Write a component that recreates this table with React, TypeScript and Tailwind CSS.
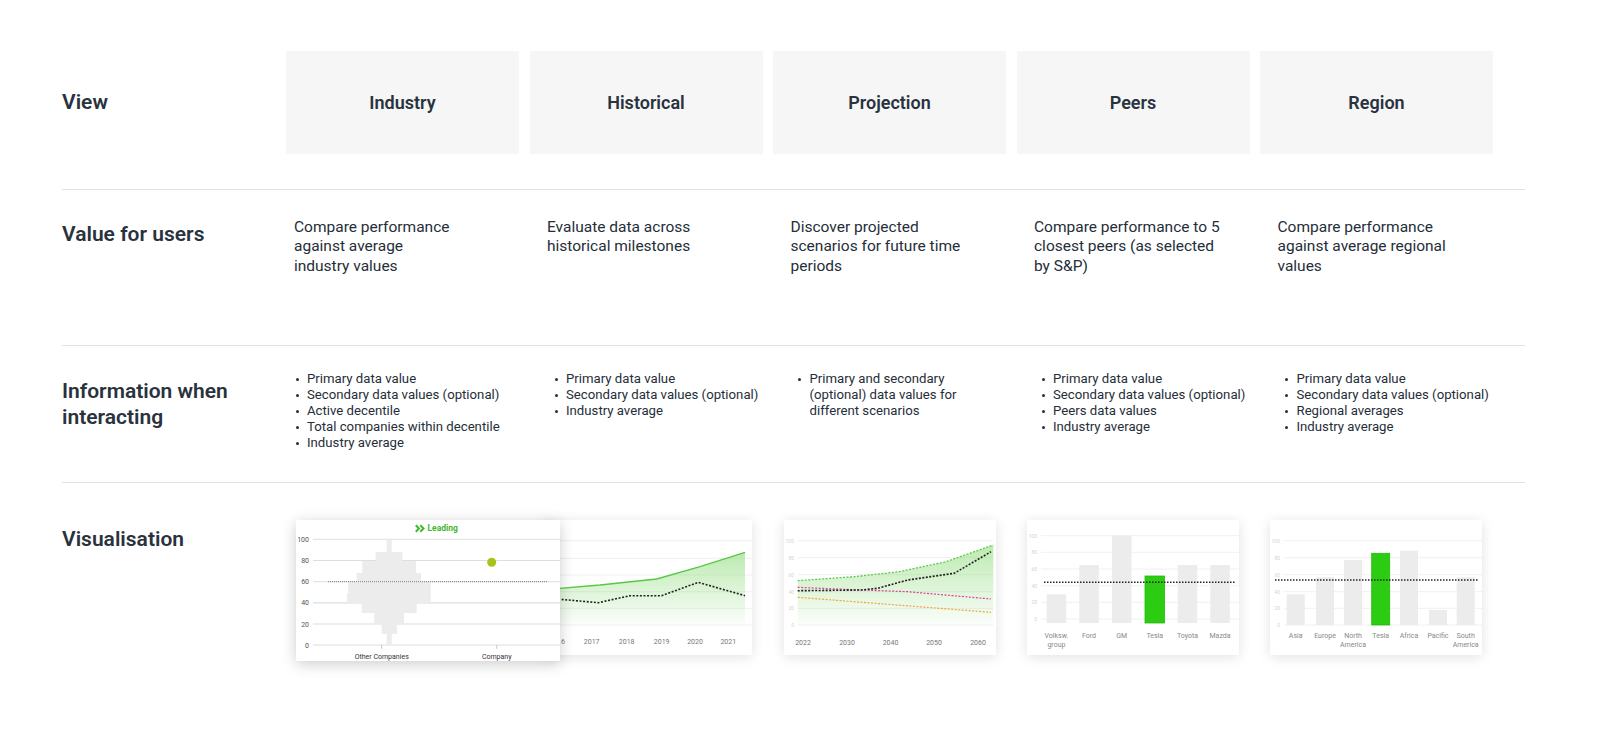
const views = ["Industry", "Historical", "Projection", "Peers", "Region"];

const values = [
  ["Compare performance", "against average", "industry values"],
  ["Evaluate data across", "historical milestones"],
  ["Discover projected", "scenarios for future time", "periods"],
  ["Compare performance to 5", "closest peers (as selected", "by S&P)"],
  ["Compare performance", "against average regional", "values"],
];

const infoItems: string[][][] = [
  [
    ["Primary data value"],
    ["Secondary data values (optional)"],
    ["Active decentile"],
    ["Total companies within decentile"],
    ["Industry average"],
  ],
  [["Primary data value"], ["Secondary data values (optional)"], ["Industry average"]],
  [["Primary and secondary", "(optional) data values for", "different scenarios"]],
  [
    ["Primary data value"],
    ["Secondary data values (optional)"],
    ["Peers data values"],
    ["Industry average"],
  ],
  [
    ["Primary data value"],
    ["Secondary data values (optional)"],
    ["Regional averages"],
    ["Industry average"],
  ],
];

const font = "Roboto, 'Liberation Sans', sans-serif";

function pts(list: number[][]) {
  return list.map((p) => p.join(",")).join(" ");
}

function IndustryChart() {
  const grid = [19.3, 40.5, 61.7, 82.9, 104, 125];
  const labels = ["100", "80", "60", "40", "20", "0"];
  const hist = [
    [19.3, 32, 90.7, 95.7],
    [32, 41, 79.7, 106.3],
    [41, 53, 66.3, 120],
    [53, 62, 60.7, 125],
    [62, 73, 52.3, 134.7],
    [73, 84, 51, 134.7],
    [84, 93, 65.7, 120.7],
    [93, 104, 78.3, 108],
    [104, 114, 85.7, 101],
    [114, 125, 90.7, 95.7],
  ];
  return (
    <svg width="264" height="141" viewBox="0 0 264 141" fontFamily={font}>
      {grid.map((y) => (
        <line key={y} x1="17" x2="264" y1={y} y2={y} stroke="#dedede" strokeWidth="1.1" />
      ))}
      {labels.map((l, i) => (
        <text key={l} x="13" y={grid[i] + 2.5} fontSize="7" fill="#555" textAnchor="end">
          {l}
        </text>
      ))}
      {hist.map(([y1, y2, x1, x2]) => (
        <rect key={y1} x={x1} y={y1} width={x2 - x1} height={y2 - y1} fill="#ececec" />
      ))}
      <line x1="32" x2="252" y1="61.7" y2="61.7" stroke="#666" strokeWidth="0.8" strokeDasharray="1 1" />
      <circle cx="195.7" cy="42.3" r="4.5" fill="#a6c51c" />
      <path d="M119.8 5.3 L123 8.5 L119.8 11.7 M124.3 5.3 L127.5 8.5 L124.3 11.7" fill="none" stroke="#3fb82f" strokeWidth="2" />
      <text x="131.5" y="11.3" fontSize="8.5" fontWeight="700" fill="#3fb82f">
        Leading
      </text>
      <line x1="85.7" x2="85.7" y1="125" y2="129" stroke="#bbb" strokeWidth="0.8" />
      <line x1="200.7" x2="200.7" y1="125" y2="129" stroke="#bbb" strokeWidth="0.8" />
      <text x="85.7" y="139" fontSize="7" fill="#333" textAnchor="middle">
        Other Companies
      </text>
      <text x="200.7" y="139" fontSize="7" fill="#333" textAnchor="middle">
        Company
      </text>
    </svg>
  );
}

function HistoricalChart() {
  const grid = [20.7, 38.3, 55, 71.7, 88.3, 105];
  const green = [
    [0, 69.5],
    [20, 68.3],
    [60, 65],
    [116.7, 59],
    [160, 46.7],
    [205, 32.3],
  ];
  const black = [
    [0, 79],
    [20, 79.3],
    [58.3, 82.7],
    [90, 75.7],
    [121.7, 75.7],
    [158.3, 62.3],
    [205, 75.7],
  ];
  const years: [string, number][] = [
    ["2016", 17],
    ["2017", 51.7],
    ["2018", 86.7],
    ["2019", 121.7],
    ["2020", 155],
    ["2021", 188.3],
  ];
  return (
    <svg width="212" height="135" viewBox="0 0 212 135" fontFamily={font}>
      <defs>
        <linearGradient id="histFill" x1="0" x2="0" y1="0" y2="1">
          <stop offset="0" stopColor="#8fdc7c" stopOpacity="0.6" />
          <stop offset="1" stopColor="#8fdc7c" stopOpacity="0.03" />
        </linearGradient>
      </defs>
      {grid.map((y) => (
        <line key={y} x1="0" x2="212" y1={y} y2={y} stroke="#efefef" strokeWidth="1" />
      ))}
      <polygon points={pts([...green, [205, 105], [0, 105]])} fill="url(#histFill)" />
      <polyline points={pts(green)} fill="none" stroke="#56c842" strokeWidth="1.3" />
      <polyline points={pts(black)} fill="none" stroke="#222" strokeWidth="1.6" strokeDasharray="2 1.6" />
      {years.map(([y, x]) => (
        <text key={y} x={x} y="124" fontSize="7" fill="#777" textAnchor="middle">
          {y}
        </text>
      ))}
    </svg>
  );
}

function ProjectionChart() {
  const grid = [20.7, 37.7, 54.7, 71.7, 88.3, 105];
  const labels = ["100", "80", "60", "40", "20", "0"];
  const green = [
    [13.7, 60.7],
    [70, 56.7],
    [115.3, 51.7],
    [162, 41.7],
    [209.3, 25],
  ];
  const black = [
    [13.7, 70.7],
    [77, 70],
    [93.7, 68.3],
    [123.7, 60],
    [170.3, 53.3],
    [207, 31.7],
  ];
  const pink = [
    [13.7, 67.3],
    [77, 70],
    [123.7, 71.7],
    [207, 79],
  ];
  const orange = [
    [13.7, 77.3],
    [207, 92.3],
  ];
  const years: [string, number][] = [
    ["2022", 19],
    ["2030", 63],
    ["2040", 106.5],
    ["2050", 150],
    ["2060", 194],
  ];
  return (
    <svg width="212" height="135" viewBox="0 0 212 135" fontFamily={font}>
      <defs>
        <linearGradient id="projFill" x1="0" x2="0" y1="0" y2="1">
          <stop offset="0" stopColor="#8fdc7c" stopOpacity="0.6" />
          <stop offset="1" stopColor="#8fdc7c" stopOpacity="0.03" />
        </linearGradient>
      </defs>
      {grid.map((y) => (
        <line key={y} x1="13.7" x2="209" y1={y} y2={y} stroke="#efefef" strokeWidth="1" />
      ))}
      {labels.map((l, i) => (
        <text key={l} x="10" y={grid[i] + 1.8} fontSize="5" fill="#d4d4d4" textAnchor="end">
          {l}
        </text>
      ))}
      <polygon points={pts([...green, [209.3, 105], [13.7, 105]])} fill="url(#projFill)" />
      <polyline points={pts(green)} fill="none" stroke="#5cc94a" strokeWidth="1.3" strokeDasharray="2 1.5" />
      <polyline points={pts(orange)} fill="none" stroke="#f2a63a" strokeWidth="1.2" strokeDasharray="2 1.5" />
      <polyline points={pts(pink)} fill="none" stroke="#e0409a" strokeWidth="1.2" strokeDasharray="2 1.5" />
      <polyline points={pts(black)} fill="none" stroke="#222" strokeWidth="1.6" strokeDasharray="2 1.5" />
      {years.map(([y, x]) => (
        <text key={y} x={x} y="125" fontSize="7" fill="#777" textAnchor="middle">
          {y}
        </text>
      ))}
    </svg>
  );
}

type Bar = { label: string[]; x: number; top: number; hi?: boolean };

function BarChart({
  grid,
  bars,
  barWidth,
  bottom,
  avgY,
  avgX1,
}: {
  grid: number[];
  bars: Bar[];
  barWidth: number;
  bottom: number;
  avgY: number;
  avgX1: number;
}) {
  const labels = ["100", "80", "60", "40", "20", "0"];
  return (
    <svg width="212" height="135" viewBox="0 0 212 135" fontFamily={font}>
      {grid.map((y) => (
        <line key={y} x1="14" x2="212" y1={y} y2={y} stroke="#f0f0f0" strokeWidth="1" />
      ))}
      {labels.map((l, i) => (
        <text key={l} x="10" y={grid[i] + 1.8} fontSize="5" fill="#d4d4d4" textAnchor="end">
          {l}
        </text>
      ))}
      {bars.map((b) => (
        <rect
          key={b.label.join(" ")}
          x={b.x}
          y={b.top}
          width={barWidth}
          height={bottom - b.top}
          fill={b.hi ? "#2bcc12" : "#ececec"}
          stroke={b.hi ? "#26b80f" : "none"}
          strokeWidth="0.8"
        />
      ))}
      <line x1={avgX1} x2="208" y1={avgY} y2={avgY} stroke="#222" strokeWidth="1.5" strokeDasharray="1.5 1.5" />
      {bars.map((b) =>
        b.label.map((t, i) => (
          <text
            key={t}
            x={b.x + barWidth / 2}
            y={118 + i * 9}
            fontSize="7"
            fill="#888"
            textAnchor="middle"
          >
            {t}
          </text>
        ))
      )}
    </svg>
  );
}

function PeersChart() {
  return (
    <BarChart
      grid={[15.7, 32.3, 49, 65.7, 82.3, 99]}
      barWidth={19.5}
      bottom={103}
      avgY={62.3}
      avgX1={17}
      bars={[
        { label: ["Volksw.", "group"], x: 19.7, top: 74.3 },
        { label: ["Ford"], x: 52.3, top: 45 },
        { label: ["GM"], x: 85, top: 15.7 },
        { label: ["Tesla"], x: 118, top: 56, hi: true },
        { label: ["Toyota"], x: 150.7, top: 45 },
        { label: ["Mazda"], x: 183.3, top: 45 },
      ]}
    />
  );
}

function RegionChart() {
  return (
    <BarChart
      grid={[20.7, 37.7, 54.7, 71.7, 88.3, 105]}
      barWidth={18}
      bottom={105}
      avgY={60}
      avgX1={5}
      bars={[
        { label: ["Asia"], x: 16.7, top: 74.3 },
        { label: ["Europe"], x: 46, top: 57.3 },
        { label: ["North", "America"], x: 74, top: 40 },
        { label: ["Tesla"], x: 101.7, top: 33.3, hi: true },
        { label: ["Africa"], x: 130, top: 30.7 },
        { label: ["Pacific"], x: 159, top: 90 },
        { label: ["South", "America"], x: 186.7, top: 57.3 },
      ]}
    />
  );
}

function RowLabel({ children, className }: { children: React.ReactNode; className: string }) {
  return (
    <div className={`w-[224px] shrink-0 text-[21px] font-semibold leading-[25.5px] text-[#29323d] ${className}`}>
      {children}
    </div>
  );
}

const cols = "grid grid-cols-[repeat(5,233px)] gap-x-[10.5px]";

export default function App() {
  return (
    <div
      className="min-h-[747px] w-full bg-white text-[#252e39]"
      style={{ fontFamily: font }}
    >
      <div className="ml-[62px] w-[1463px]">
        {/* View */}
        <div className="flex items-center pt-[51px] pb-[35px]">
          <RowLabel className="">View</RowLabel>
          <div className={cols}>
            {views.map((v) => (
              <div
                key={v}
                className="flex h-[103px] items-center justify-center bg-[#f6f6f6] text-[18px] font-semibold text-[#29323d]"
              >
                {v}
              </div>
            ))}
          </div>
        </div>
        <div className="h-px bg-[#e1e1e1]" />

        {/* Value for users */}
        <div className="flex h-[155px]">
          <RowLabel className="pt-[31.5px]">Value for users</RowLabel>
          <div className={`${cols} pt-[28px]`}>
            {values.map((lines, i) => (
              <div
                key={i}
                className={`whitespace-nowrap text-[15.5px] leading-[19.4px] ${i === 0 ? "pl-[8px]" : "pl-[17.5px]"}`}
              >
                {lines.map((l) => (
                  <div key={l}>{l}</div>
                ))}
              </div>
            ))}
          </div>
        </div>
        <div className="h-px bg-[#e1e1e1]" />

        {/* Information when interacting */}
        <div className="flex h-[136px]">
          <RowLabel className="pt-[33px]">
            Information when
            <br />
            interacting
          </RowLabel>
          <div className={`${cols} pt-[25px]`}>
            {infoItems.map((items, i) => (
              <ul
                key={i}
                className={`whitespace-nowrap text-[13.2px] leading-[16px] ${i === 0 ? "pl-[9.5px]" : "pl-[25px]"}`}
              >
                {items.map((lines) => (
                  <li key={lines[0]} className="flex">
                    <span className="flex h-[16px] w-[11.5px] shrink-0 items-center">
                      <span className="h-[3px] w-[3px] rounded-full bg-[#252e39]" />
                    </span>
                    <span>
                      {lines.map((l) => (
                        <div key={l}>{l}</div>
                      ))}
                    </span>
                  </li>
                ))}
              </ul>
            ))}
          </div>
        </div>
        <div className="h-px bg-[#e1e1e1]" />

        {/* Visualisation */}
        <div className="flex pb-[60px]">
          <RowLabel className="pt-[44px]">Visualisation</RowLabel>
          <div className={`${cols} pt-[37px]`}>
            <div className="relative z-10 ml-[10px] h-[141px] w-[264px] bg-white shadow-[0_3px_14px_rgba(0,0,0,0.2)]">
              <IndustryChart />
            </div>
            <div className="ml-[10.5px] h-[135px] w-[212px] overflow-hidden bg-white shadow-[0_2px_12px_rgba(0,0,0,0.12)]">
              <HistoricalChart />
            </div>
            <div className="ml-[10.5px] h-[135px] w-[212px] bg-white shadow-[0_2px_12px_rgba(0,0,0,0.12)]">
              <ProjectionChart />
            </div>
            <div className="ml-[10px] h-[135px] w-[212px] bg-white shadow-[0_2px_12px_rgba(0,0,0,0.12)]">
              <PeersChart />
            </div>
            <div className="ml-[10px] h-[135px] w-[212px] bg-white shadow-[0_2px_12px_rgba(0,0,0,0.12)]">
              <RegionChart />
            </div>
          </div>
        </div>
      </div>
    </div>
  );
}
